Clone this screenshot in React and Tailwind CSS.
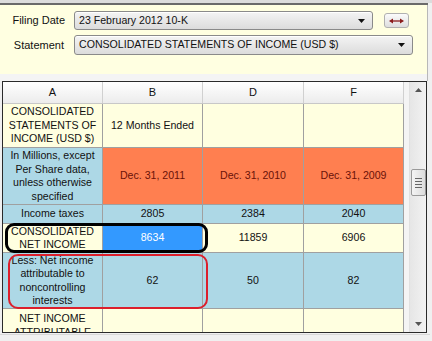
import React from "react";

const Caret = () => (
  <svg width="7" height="4" viewBox="0 0 7 4" className="shrink-0">
    <path d="M0 0 L7 0 L3.5 4 Z" fill="#111" />
  </svg>
);

function Dropdown({ text, w }) {
  return (
    <div
      className={`${w} h-full flex items-center justify-between pl-[4px] pr-[7px] border border-[#8a8a8a] rounded-[3px] bg-gradient-to-b from-[#f4f4f4] to-[#dcdcdc] shadow-[inset_0_1px_0_#ffffff]`}
    >
      <span className="text-[#111] whitespace-nowrap">{text}</span>
      <Caret />
    </div>
  );
}

const Cell = ({ w, bg, children, className = "" }) => (
  <div
    className={`${w} ${bg} h-full shrink-0 flex items-center justify-center text-center border-r border-[#a0a0a0] leading-[13.5px] ${className}`}
  >
    {children}
  </div>
);

function Row({ h, cells }) {
  const widths = ["w-[100px]", "w-[100px]", "w-[101px]", "w-[100px]"];
  return (
    <div className={`${h} flex shrink-0 border-b border-[#a0a0a0]`}>
      {cells.map((c, i) => (
        <Cell key={i} w={widths[i]} bg={c.bg} className={c.cls || ""}>
          {c.t}
        </Cell>
      ))}
    </div>
  );
}

export default function App() {
  const Y = "bg-[#ffffe0]";
  const B = "bg-[#add8e6]";
  const O = "bg-[#ff7f50]";
  const dec = "text-[#6a1208]";
  return (
    <div className="w-[432px] h-[341px] overflow-hidden bg-[#f0f0f0] font-['Liberation_Sans',Arial,sans-serif] text-[10.6px] text-[#111] flex flex-col">
      {/* top strip */}
      <div className="h-[3px] bg-[#dcdcdc] shrink-0" />
      <div className="w-[428px] h-[2px] bg-[#6a6a6a] shrink-0" />
      {/* yellow panel */}
      <div className="w-[428px] h-[69px] shrink-0 bg-[#ffffe1] border-r border-[#b8b8b8] pt-[6px] flex flex-col gap-[5px]">
        <div className="h-[19px] flex items-center">
          <div className="w-[65px] text-right text-[11px]">Filing Date</div>
          <div className="w-[9px]" />
          <Dropdown text="23 February 2012 10-K" w="w-[299px]" />
          <div className="w-[11px]" />
          <div className="w-[25px] h-[15px] rounded-[3px] border border-[#b0b0b0] bg-gradient-to-b from-[#fbfbfb] to-[#dedede] flex items-center justify-center">
            <svg width="15" height="6" viewBox="0 0 15 6">
              <path d="M1.5 3 H13.5" stroke="#8b1c1c" strokeWidth="1.3" />
              <path d="M0 3 L4 0.5 L4 5.5 Z" fill="#8b1c1c" />
              <path d="M15 3 L11 0.5 L11 5.5 Z" fill="#8b1c1c" />
            </svg>
          </div>
        </div>
        <div className="h-[20px] flex items-center">
          <div className="w-[64px] text-right text-[11px]">Statement</div>
          <div className="w-[10px]" />
          <Dropdown text="CONSOLIDATED STATEMENTS OF INCOME (USD $)" w="w-[339px]" />
        </div>
      </div>
      <div className="h-[7px] shrink-0 w-[428px] bg-[#f4f4f4] border-r border-[#b8b8b8]" />
      {/* grid */}
      <div className="ml-[2px] w-[425px] h-[252px] shrink-0 border border-[#2a2a2a] bg-[#f0f0f0] flex relative">
        <div className="w-[401px] h-full flex flex-col overflow-hidden bg-white">
          {/* header */}
          <div className="h-[22px] shrink-0 flex bg-gradient-to-b from-[#ffffff] to-[#ececec] border-b border-[#c8c8c8] text-[11px]">
            <div className="w-[100px] flex items-center justify-center border-r border-[#d0d0d0]">A</div>
            <div className="w-[100px] flex items-center justify-center border-r border-[#d0d0d0]">B</div>
            <div className="w-[101px] flex items-center justify-center border-r border-[#d0d0d0]">D</div>
            <div className="w-[100px] flex items-center justify-center border-r border-[#d0d0d0]">F</div>
          </div>
          <Row
            h="h-[44px]"
            cells={[
              { bg: Y, t: <>CONSOLIDATED<br />STATEMENTS OF<br />INCOME (USD $)</> },
              { bg: Y, t: "12 Months Ended" },
              { bg: Y, t: "" },
              { bg: Y, t: "" },
            ]}
          />
          <Row
            h="h-[57px]"
            cells={[
              { bg: B, t: <>In Millions, except<br />Per Share data,<br />unless otherwise<br />specified</> },
              { bg: O, t: "Dec. 31, 2011", cls: dec },
              { bg: O, t: "Dec. 31, 2010", cls: dec },
              { bg: O, t: "Dec. 31, 2009", cls: dec },
            ]}
          />
          <Row
            h="h-[19px]"
            cells={[
              { bg: B, t: "Income taxes" },
              { bg: B, t: "2805" },
              { bg: B, t: "2384" },
              { bg: B, t: "2040" },
            ]}
          />
          <Row
            h="h-[29px]"
            cells={[
              { bg: Y, t: <>CONSOLIDATED<br />NET INCOME</> },
              { bg: "bg-[#3399ff]", t: "8634", cls: "text-white" },
              { bg: Y, t: "11859" },
              { bg: Y, t: "6906" },
            ]}
          />
          <Row
            h="h-[56px]"
            cells={[
              { bg: B, t: <>Less: Net income<br />attributable to<br />noncontrolling<br />interests</> },
              { bg: B, t: "62" },
              { bg: B, t: "50" },
              { bg: B, t: "82" },
            ]}
          />
          <div className="h-[60px] flex shrink-0">
            <div className="w-[100px] bg-[#ffffe0] border-r border-[#a0a0a0] text-center leading-[13.5px] pt-[3px]">
              NET INCOME<br />ATTRIBUTABLE
            </div>
            <div className="w-[100px] bg-[#ffffe0] border-r border-[#a0a0a0]" />
            <div className="w-[101px] bg-[#ffffe0] border-r border-[#a0a0a0]" />
            <div className="w-[100px] bg-[#ffffe0] border-r border-[#a0a0a0]" />
          </div>
        </div>
        <div className="w-[5px] h-full bg-[#f4f4f4]" />
        {/* scrollbar */}
        <div className="w-[17px] h-full bg-gradient-to-r from-[#e6e6e6] to-[#f2f2f2] flex flex-col items-center justify-between py-[6px] border-l border-[#e0e0e0]">
          <svg width="7" height="4" viewBox="0 0 7 4">
            <path d="M0 4 L7 4 L3.5 0 Z" fill="#555" />
          </svg>
          <svg width="7" height="4" viewBox="0 0 7 4">
            <path d="M0 0 L7 0 L3.5 4 Z" fill="#555" />
          </svg>
        </div>
        <div className="absolute left-[408px] top-[87px] w-[15px] h-[27px] rounded-[2px] border border-[#9a9a9a] bg-gradient-to-r from-[#f4f4f4] to-[#dcdcdc] flex flex-col items-center justify-center gap-[2px]">
          <div className="w-[7px] h-px bg-[#666]" />
          <div className="w-[7px] h-px bg-[#666]" />
          <div className="w-[7px] h-px bg-[#666]" />
          <div className="w-[7px] h-px bg-[#666]" />
        </div>
        {/* annotation outlines */}
        <div className="absolute left-[2px] top-[141px] w-[203px] h-[30px] rounded-[9px] border-[3px] border-black pointer-events-none" />
        <div className="absolute left-[5px] top-[172px] w-[200px] h-[55px] rounded-[10px] border-[2.5px] border-[#dc1f2c] pointer-events-none" />
      </div>
      <div className="h-[1px] shrink-0" />
      <div className="w-[430px] h-px bg-[#d8d8d8] shrink-0" />
    </div>
  );
}
